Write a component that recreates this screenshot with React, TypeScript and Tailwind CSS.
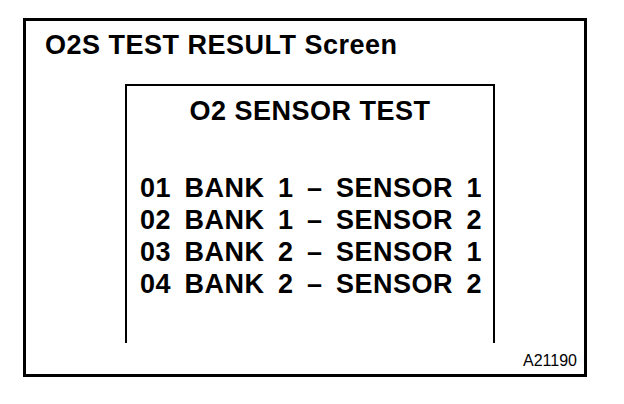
const rows = [
  "01 BANK 1 – SENSOR 1",
  "02 BANK 1 – SENSOR 2",
  "03 BANK 2 – SENSOR 1",
  "04 BANK 2 – SENSOR 2",
];

export default function App() {
  return (
    <div className="w-[624px] h-[404px] bg-white pt-[18px] pl-[23px] font-['Liberation_Sans',Arial,sans-serif] text-black">
      <div className="w-[564px] h-[359px] border-[3px] border-black flex flex-col">
        <h1 className="pl-[19px] pt-[11px] text-[27px] leading-[27px] font-bold tracking-[0.5px]">
          O2S TEST RESULT Screen
        </h1>

        {/* screen panel, open at the bottom */}
        <div className="ml-[99px] mt-[25px] w-[370px] h-[259px] border-2 border-b-0 border-black">
          <div className="pt-[12px] text-center text-[27px] leading-[27px] font-bold tracking-[0.5px]">
            O2 SENSOR TEST
          </div>
          <ul className="mt-[47px] pl-[13px] text-[27px] leading-[32px] font-bold tracking-[0.5px] [word-spacing:5.5px]">
            {rows.map((r) => (
              <li key={r} className="whitespace-nowrap">{r}</li>
            ))}
          </ul>
        </div>

        <div className="flex justify-end pr-[7px] mt-[10px] text-[16px] leading-[16px]">
          A21190
        </div>
      </div>
    </div>
  );
}
